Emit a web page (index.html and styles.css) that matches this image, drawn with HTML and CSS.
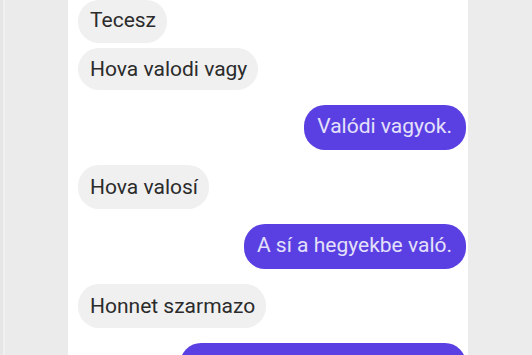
FILE: index.html
```html
<!DOCTYPE html>
<html lang="hu">
<head>
<meta charset="utf-8">
<title>Chat</title>
<link rel="stylesheet" href="styles.css">
</head>
<body>
<div class="screen">
  <div class="side side-left"></div>
  <div class="chat">
    <div class="msg in first">Tecesz</div>
    <div class="msg in same">Hova valodi vagy</div>
    <div class="msg out">Valódi vagyok.</div>
    <div class="msg in">Hova valosí</div>
    <div class="msg out">A sí a hegyekbe való.</div>
    <div class="msg in">Honnet szarmazo</div>
    <div class="msg out last"></div>
  </div>
  <div class="side side-right"></div>
</div>
</body>
</html>
```

FILE: styles.css
```css
html, body {
  margin: 0;
  padding: 0;
  width: 532px;
  height: 355px;
  overflow: hidden;
  background: #ffffff;
}

.screen {
  display: grid;
  grid-template-columns: 68px 400px 64px;
  height: 355px;
}

.side-left {
  background: linear-gradient(to right, #e6e6e6 0, #e6e6e6 3px, #f1f1f1 3px, #f1f1f1 5px, #ebebeb 5px);
}

.side-right {
  background: #ececec;
}

.chat {
  background: #ffffff;
  display: flex;
  flex-direction: column;
  padding: 0 2px 0 10px;
  font-family: Roboto, "Noto Sans", sans-serif;
  font-size: 21px;
  font-weight: 400;
  overflow: hidden;
}

.msg {
  box-sizing: border-box;
  flex: none;
  height: 44px;
  line-height: 44px;
  padding: 0 11px 0 12px;
  border-radius: 21px;
  white-space: nowrap;
  margin-top: 15px;
}

.msg.first {
  margin-top: 0;
  height: 43px;
  line-height: 41px;
}

.msg.same {
  margin-top: 5px;
  height: 42px;
  line-height: 42px;
}

.in {
  align-self: flex-start;
  background: #f0f0f0;
  color: #2b2b2b;
}

.out {
  align-self: flex-end;
  background: #5a40e2;
  color: #e4e0fa;
  height: 45px;
  line-height: 43px;
  padding: 0 14px 0 13px;
}

.last {
  width: 286px;
}
```
